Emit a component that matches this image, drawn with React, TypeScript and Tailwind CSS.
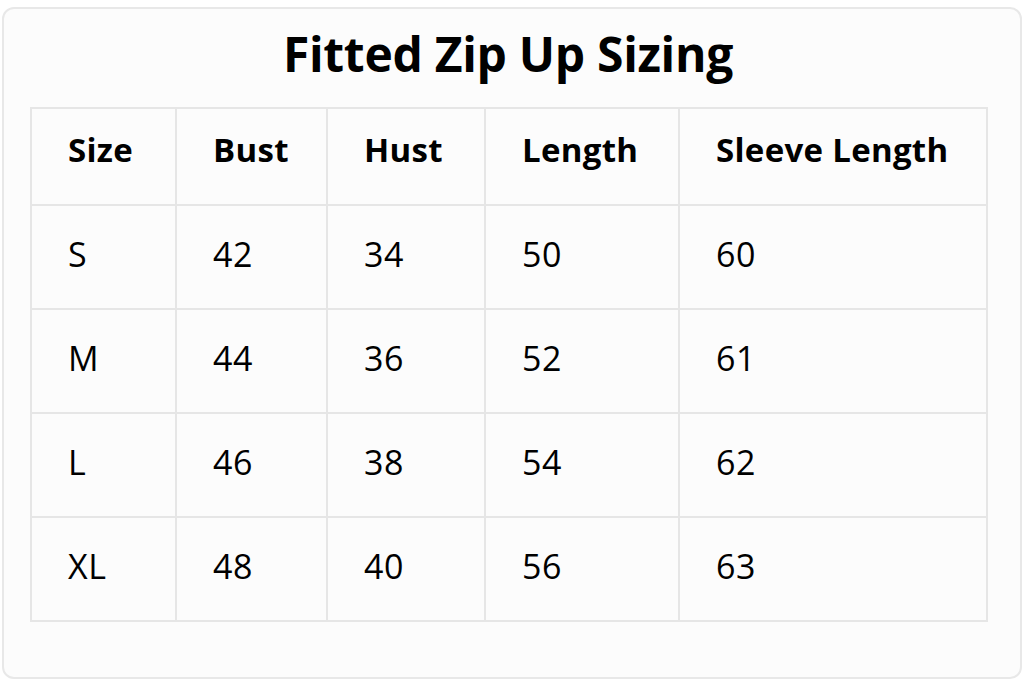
const headers = ['Size', 'Bust', 'Hust', 'Length', 'Sleeve Length'];

const rows = [
  ['S', '42', '34', '50', '60'],
  ['M', '44', '36', '52', '61'],
  ['L', '46', '38', '54', '62'],
  ['XL', '48', '40', '56', '63'],
];

const colWidths = ['w-[145px]', 'w-[151px]', 'w-[158px]', 'w-[194px]', 'w-[308px]'];

export default function App() {
  return (
    <div className="w-[1024px] h-[683px] bg-white pt-[7px] pl-[2px] font-['Open_Sans','Noto_Sans',sans-serif] text-black">
      <div className="w-[1020px] h-[672px] rounded-[12px] border-2 border-[#e8e8e8] bg-[#fcfcfc] pl-[26px]">
        <h1 className="h-[98px] pr-[34px] pb-[8px] flex items-center justify-center text-[48px] font-bold tracking-[-0.3px]">
          Fitted Zip Up Sizing
        </h1>
        <table className="border-collapse table-fixed">
          <thead>
            <tr className="h-[97px]">
              {headers.map((h, i) => (
                <th
                  key={h}
                  className={`${colWidths[i]} border-2 border-[#e6e6e6] pl-[36px] text-left align-middle text-[33px] font-bold pb-[14px] tracking-[0.3px]`}
                >
                  {h}
                </th>
              ))}
            </tr>
          </thead>
          <tbody>
            {rows.map((r) => (
              <tr key={r[0]} className="h-[104px]">
                {r.map((c, i) => (
                  <td
                    key={i}
                    className={`${colWidths[i]} border-2 border-[#e6e6e6] pl-[36px] text-left align-middle text-[34px] pb-[6px] tracking-[0.5px]`}
                  >
                    {c}
                  </td>
                ))}
              </tr>
            ))}
          </tbody>
        </table>
      </div>
    </div>
  );
}
